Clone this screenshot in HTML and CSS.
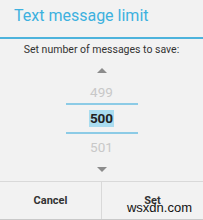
FILE: index.html
```html
<!DOCTYPE html>
<html lang="en">
<head>
<meta charset="UTF-8">
<title>Text message limit</title>
<link rel="stylesheet" href="styles.css">
</head>
<body>

<div class="dialog">
  <div class="header">
    <h1>Text message limit</h1>
  </div>

  <p class="msg">Set number of messages to save:</p>

  <div class="picker">
    <div class="arrow"><span class="up"></span></div>
    <div class="num prev">499</div>
    <div class="num current"><span>500</span></div>
    <div class="num next">501</div>
    <div class="arrow"><span class="down"></span></div>
  </div>

  <div class="buttons">
    <a href="#">Cancel</a>
    <a href="#">Set</a>
  </div>

  <div class="mark">wsxdn.com</div>
</div>

</body>
</html>
```

FILE: styles.css
```css
body {
  margin: 0;
  font-family: Roboto, "Liberation Sans", Arial, sans-serif;
  background-color: #f2f2f2;
}

.dialog {
  position: relative;
  width: 203px;
  height: 220px;
  box-sizing: border-box;
  border-bottom: 1px solid #c9c9c9;
  display: flex;
  flex-direction: column;
  overflow: hidden;
}

.header {
  height: 39px;
  box-sizing: border-box;
  padding: 6px 0 0 14px;
  border-bottom: 2px solid #4db3dc;
}

.header h1 {
  margin: 0;
  font-size: 16px;
  font-weight: normal;
  line-height: 20px;
  color: #3db1df;
}

.msg {
  margin: 0;
  height: 21px;
  padding-top: 4px;
  box-sizing: border-box;
  font-size: 10.5px;
  line-height: 14px;
  text-align: center;
  color: #333;
}

.picker {
  display: flex;
  flex-direction: column;
  align-items: center;
  height: 121px;
}

.arrow {
  height: 20px;
  display: flex;
  align-items: center;
  justify-content: center;
}

.arrow span {
  width: 0;
  height: 0;
  border-left: 5px solid transparent;
  border-right: 5px solid transparent;
}

.arrow .up {
  border-bottom: 5px solid #8c8c8c;
}

.arrow .down {
  border-top: 5px solid #8c8c8c;
}

.num {
  width: 72px;
  text-align: center;
  font-size: 13.5px;
  display: flex;
  align-items: center;
  justify-content: center;
}

.prev {
  height: 23px;
  color: #c8c8c8;
  border-bottom: 2px solid #8ccbe6;
}

.current {
  height: 27px;
  font-weight: bold;
  color: #222;
  border-bottom: 2px solid #8ccbe6;
}

.current span {
  background-color: #a9dcef;
  padding: 0 1px;
  line-height: 17px;
}

.next {
  height: 25px;
  color: #c8c8c8;
}

.buttons {
  flex: 1;
  display: flex;
  border-top: 1px solid #d9d9d9;
}

.buttons a {
  flex: 1;
  display: flex;
  align-items: center;
  justify-content: center;
  font-size: 11px;
  font-weight: bold;
  color: #333;
  text-decoration: none;
}

.buttons a + a {
  border-left: 1px solid #d9d9d9;
}

.mark {
  position: absolute;
  right: 11px;
  bottom: 4px;
  font-family: "Liberation Sans", Arial, sans-serif;
  font-size: 13px;
  color: #111;
}
```
